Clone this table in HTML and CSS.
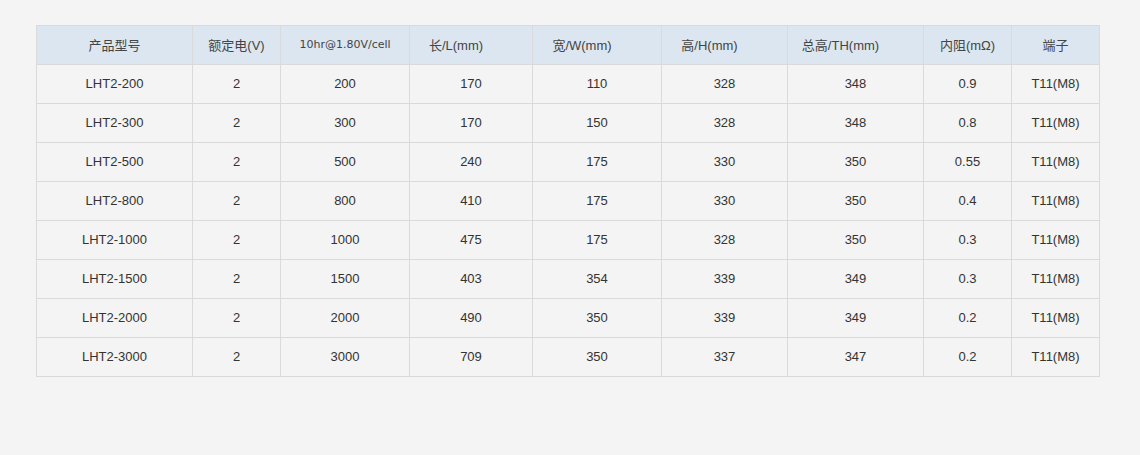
FILE: index.html
```html
<!DOCTYPE html>
<html lang="zh">
<head>
<meta charset="utf-8">
<link rel="stylesheet" href="styles.css">
</head>
<body>
<table class="spec">
<colgroup>
<col class="c1"><col class="c2"><col class="c3"><col class="c4"><col class="c5"><col class="c6"><col class="c7"><col class="c8"><col class="c9">
</colgroup>
<thead>
<tr>
<th>产品型号</th>
<th>额定电(V)</th>
<th class="small">10hr@1.80V/cell</th>
<th class="off">长/L(mm)</th>
<th class="off">宽/W(mm)</th>
<th class="off">高/H(mm)</th>
<th class="off">总高/TH(mm)</th>
<th>内阻(mΩ)</th>
<th>端子</th>
</tr>
</thead>
<tbody>
<tr><td>LHT2-200</td><td>2</td><td>200</td><td>170</td><td>110</td><td>328</td><td>348</td><td>0.9</td><td>T11(M8)</td></tr>
<tr><td>LHT2-300</td><td>2</td><td>300</td><td>170</td><td>150</td><td>328</td><td>348</td><td>0.8</td><td>T11(M8)</td></tr>
<tr><td>LHT2-500</td><td>2</td><td>500</td><td>240</td><td>175</td><td>330</td><td>350</td><td>0.55</td><td>T11(M8)</td></tr>
<tr><td>LHT2-800</td><td>2</td><td>800</td><td>410</td><td>175</td><td>330</td><td>350</td><td>0.4</td><td>T11(M8)</td></tr>
<tr><td>LHT2-1000</td><td>2</td><td>1000</td><td>475</td><td>175</td><td>328</td><td>350</td><td>0.3</td><td>T11(M8)</td></tr>
<tr><td>LHT2-1500</td><td>2</td><td>1500</td><td>403</td><td>354</td><td>339</td><td>349</td><td>0.3</td><td>T11(M8)</td></tr>
<tr><td>LHT2-2000</td><td>2</td><td>2000</td><td>490</td><td>350</td><td>339</td><td>349</td><td>0.2</td><td>T11(M8)</td></tr>
<tr><td>LHT2-3000</td><td>2</td><td>3000</td><td>709</td><td>350</td><td>337</td><td>347</td><td>0.2</td><td>T11(M8)</td></tr>
</tbody>
</table>
</body>
</html>
```
FILE: styles.css
```css
html, body {
  margin: 0;
  padding: 0;
  background: #f4f4f4;
}
body {
  font-family: "Liberation Sans", Arial, "Noto Sans CJK SC", sans-serif;
  color: #333;
}
.spec {
  margin: 25px 0 0 36px;
  border-collapse: collapse;
  table-layout: fixed;
  width: 1063px;
}
.c1 { width: 156px; }
.c2 { width: 88px; }
.c3 { width: 129px; }
.c4 { width: 123px; }
.c5 { width: 129px; }
.c6 { width: 126px; }
.c7 { width: 136px; }
.c8 { width: 88px; }
.c9 { width: 88px; }
.spec th,
.spec td {
  border: 1px solid #dadada;
  height: 37px;
  padding: 0 0 1px;
  text-align: center;
  vertical-align: middle;
  font-size: 13px;
  font-weight: normal;
}
.spec th {
  background: #dce6f0;
  color: #444;
  height: 36px;
  padding-bottom: 2px;
}
.spec td {
  color: #333;
}
.spec th.small {
  font-family: "DejaVu Sans", Verdana, sans-serif;
  font-size: 11px;
}
.spec th.off {
  padding-right: 30px;
}
```
